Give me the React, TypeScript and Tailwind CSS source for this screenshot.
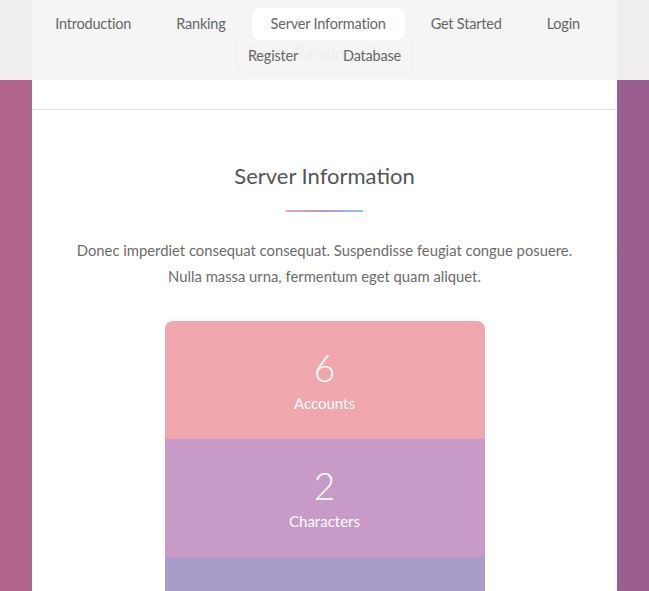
const navTop = ["Introduction", "Ranking", "Server Information", "Get Started", "Login"];
const navBottom = ["Register", "Database"];

const stats = [
  { value: "6", label: "Accounts", bg: "bg-[#efa6ad]" },
  { value: "2", label: "Characters", bg: "bg-[#c79ac8]" },
  { value: "", label: "", bg: "bg-[#a99cc8]" },
];

function NavItem({ label }: { label: string }) {
  const active = label === "Server Information";
  return (
    <a
      href="#"
      className={
        "relative z-10 h-8 px-[19px] flex items-center whitespace-nowrap rounded-lg text-[14.5px] tracking-[-0.2px] text-[#666] " +
        (active ? "bg-white" : "")
      }
    >
      {label}
    </a>
  );
}

export default function App() {
  return (
    <div
      className="min-h-screen bg-[linear-gradient(to_bottom,#efeded_80px,transparent_80px),linear-gradient(to_right,#b3668b,#9a5f8f)]"
      style={{ fontFamily: "Lato, 'Open Sans', sans-serif" }}
    >
      <div className="mx-auto w-[585px] bg-white">
        {/* Nav */}
        <nav className="relative h-[80px] bg-[#f5f5f5] py-2">
          {/* button sitting behind the nav, barely visible */}
          <div className="absolute left-[204px] top-[35px] w-[177px] h-[39px] rounded-md border border-[#f0f0f0] flex items-start justify-center pt-[4px] text-[17px] text-[#efefef] whitespace-nowrap">
            Go to Rankings Page
          </div>
          <div className="flex justify-center gap-[7px] pr-[14px]">
            {navTop.map((n) => (
              <NavItem key={n} label={n} />
            ))}
          </div>
          <div className="flex justify-center gap-[7px]">
            {navBottom.map((n) => (
              <NavItem key={n} label={n} />
            ))}
          </div>
        </nav>

        <div className="h-[29px]" />
        <div className="border-t border-[#dddddd]" />

        {/* Section */}
        <section className="pt-[54px] flex flex-col items-center">
          <h2 className="text-[22px] text-[#555] leading-[24px]">Server Information</h2>
          <div className="mt-[22px] h-[2px] w-[77px] bg-[linear-gradient(to_right,#eaa3b3,#b39ad0,#8fc3f3)]" />
          <p className="mt-[25px] text-center text-[14.8px] leading-[26px] text-[#6b6b6b]">
            Donec imperdiet consequat consequat. Suspendisse feugiat congue posuere.
            <br />
            Nulla massa urna, fermentum eget quam aliquet.
          </p>

          <div className="mt-[32px] w-[320px] rounded-t-lg overflow-hidden">
            {stats.map((s, i) => (
              <div
                key={i}
                className={"h-[118px] flex flex-col items-center pt-[27px] text-white " + s.bg}
              >
                <div className="text-[37px] font-light leading-[40px]">{s.value}</div>
                <div className="mt-[5px] text-[15px] leading-[20px]">{s.label}</div>
              </div>
            ))}
          </div>
        </section>
      </div>
    </div>
  );
}
